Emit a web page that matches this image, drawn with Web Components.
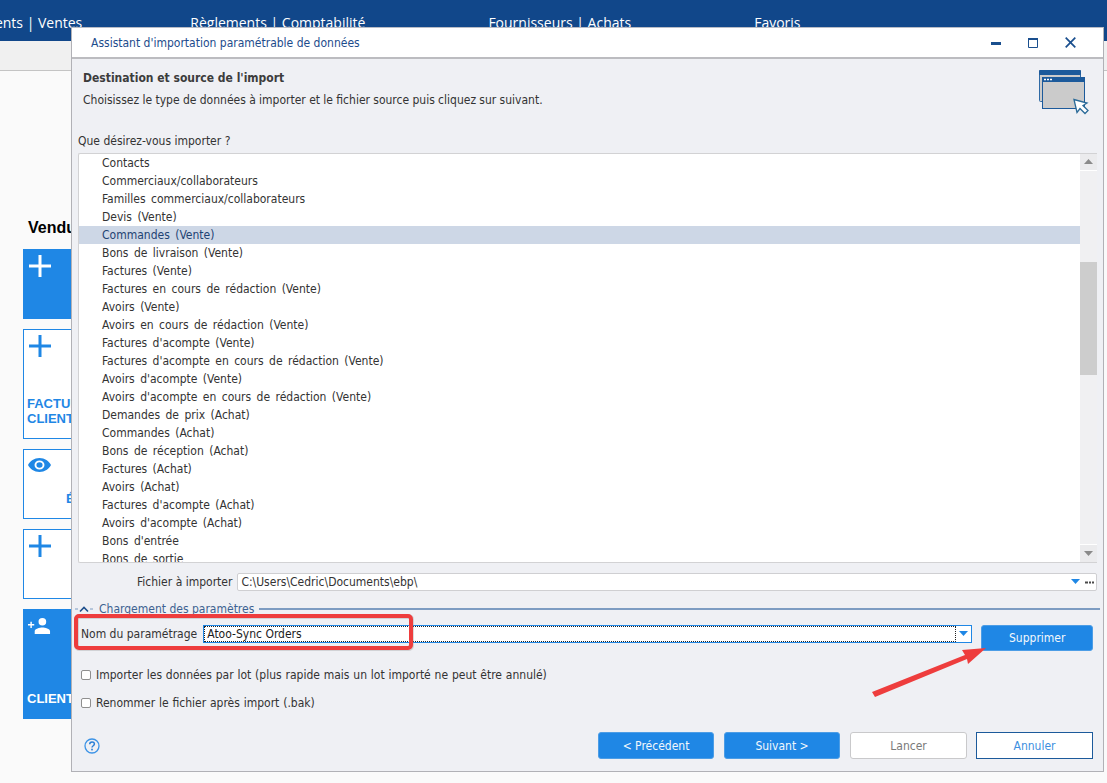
<!DOCTYPE html>
<html lang="fr">
<head>
<meta charset="utf-8">
<title>Assistant d'importation</title>
<style>
html, body { margin: 0; height: 100%; overflow: hidden; background: #fafafa; }
body { position: relative; font-family: "DejaVu Sans Condensed", "DejaVu Sans", sans-serif; font-size: 12px; }
</style>
</head>
<body>
<erp-backdrop>
  <erp-tile variant="fill" icon="plus" style="height:70px"></erp-tile>
  <erp-tile icon="plus" style="height:110px" label="FACTURES<br>CLIENTS"></erp-tile>
  <erp-tile icon="eye" style="height:70px" label="ÉTATS" indent="43"></erp-tile>
  <erp-tile icon="plus" style="height:70px"></erp-tile>
  <erp-tile variant="fill" icon="person" style="height:110px" label="CLIENTS"></erp-tile>
</erp-backdrop>

<import-dialog>
  <list-box slot="list">
    <list-row>Contacts</list-row>
    <list-row>Commerciaux/collaborateurs</list-row>
    <list-row>Familles commerciaux/collaborateurs</list-row>
    <list-row>Devis (Vente)</list-row>
    <list-row selected>Commandes (Vente)</list-row>
    <list-row>Bons de livraison (Vente)</list-row>
    <list-row>Factures (Vente)</list-row>
    <list-row>Factures en cours de rédaction (Vente)</list-row>
    <list-row>Avoirs (Vente)</list-row>
    <list-row>Avoirs en cours de rédaction (Vente)</list-row>
    <list-row>Factures d'acompte (Vente)</list-row>
    <list-row>Factures d'acompte en cours de rédaction (Vente)</list-row>
    <list-row>Avoirs d'acompte (Vente)</list-row>
    <list-row>Avoirs d'acompte en cours de rédaction (Vente)</list-row>
    <list-row>Demandes de prix (Achat)</list-row>
    <list-row>Commandes (Achat)</list-row>
    <list-row>Bons de réception (Achat)</list-row>
    <list-row>Factures (Achat)</list-row>
    <list-row>Avoirs (Achat)</list-row>
    <list-row>Factures d'acompte (Achat)</list-row>
    <list-row>Avoirs d'acompte (Achat)</list-row>
    <list-row>Bons d'entrée</list-row>
    <list-row>Bons de sortie</list-row>
  </list-box>
</import-dialog>

<mark-up></mark-up>

<script>
class ErpBackdrop extends HTMLElement {
  constructor() {
    super();
    this.attachShadow({ mode: "open" }).innerHTML = `
<style>
:host { display: block; height: 783px; color: #fff; }
.top { height: 41px; background: #11478a; display: flex; align-items: flex-start; padding-top: 13px; box-sizing: border-box;
  font: 14px/19px "Open Sans", sans-serif; white-space: nowrap; overflow: hidden; }
.top span:nth-child(1) { margin-left: -21px; }
.top span:nth-child(2) { margin-left: 108px; }
.top span:nth-child(3) { margin-left: 123px; }
.top span:nth-child(4) { margin-left: 123px; }
.band { background: #f0f0f0; border-bottom: 1px solid #c4c4c4; height: 29px; }
h2 { margin: 147px 0 12px 28px; font: bold 16px/19px "Liberation Sans", sans-serif; color: #000; }
.tiles { display: flex; flex-direction: column; gap: 10px; margin-left: 23px; width: 200px; }
</style>
<div class="top"><span>Clients | Ventes</span><span>Règlements | Comptabilité</span><span>Fournisseurs | Achats</span><span>Favoris</span></div>
<div class="band"></div>
<h2>Vendu</h2>
<div class="tiles"><slot></slot></div>`;
  }
}

const TILE_ICONS = {
  plus: `<svg width="22" height="22" viewBox="0 0 22 22"><path d="M9.500 0h3v9.500H22v3h-9.500V22h-3v-9.500H0v-3h9.500z" fill="currentColor"/></svg>`,
  eye: `<svg width="23" height="14" viewBox="0 0 24 16" preserveAspectRatio="none" style="margin:3px 0 0 -1px"><path fill-rule="evenodd" d="M12 0C6.500 0 2.200 3.300 0 8c2.200 4.700 6.500 8 12 8s9.800-3.300 12-8c-2.200-4.700-6.500-8-12-8zm0 13.200a5.200 5.200 0 1 1 0-10.400 5.200 5.200 0 0 1 0 10.400zM12 4.800a3.200 3.200 0 1 0 0 6.400 3.200 3.200 0 0 0 0-6.400z" fill="currentColor"/></svg>`,
  person: `<svg width="23" height="16" viewBox="0 0 24 17" preserveAspectRatio="none" style="margin:3px 0 0 -1px"><path d="M15 8a4 4 0 1 0 0-8 4 4 0 0 0 0 8zm0 2c-2.800 0-8 1.300-8 4v3h16v-3c0-2.700-5.200-4-8-4zM4 6.500V4H2.500v2.500H0V8h2.500v2.500H4V8h2.500V6.500z" fill="currentColor"/></svg>`
};

class ErpTile extends HTMLElement {
  connectedCallback() {
    const root = this.attachShadow({ mode: "open" });
    const fill = this.getAttribute("variant") === "fill";
    const label = this.getAttribute("label") || "";
    const indent = this.getAttribute("indent") || 4;
    root.innerHTML = `
<style>
:host { display: block; box-sizing: border-box; position: relative; color: ${fill ? "#fff" : "#1f87e5"};
  background: ${fill ? "#1f87e5" : "#fff"}; border: 1px solid #1f87e5; padding: 5px; }
.ic { display: block; line-height: 0; }
.lb { position: absolute; left: ${indent - 1}px; bottom: 12px; font: bold 13px/15px "Liberation Sans", sans-serif; white-space: nowrap; }
</style>
<span class="ic">${TILE_ICONS[this.getAttribute("icon")]}</span>
<div class="lb">${label}</div>`;
  }
}

class ImportDialog extends HTMLElement {
  constructor() {
    super();
    this.attachShadow({ mode: "open" }).innerHTML = `
<style>
:host { display: flex; flex-direction: column; position: absolute; left: 71px; top: 27px; width: 1033px; height: 745px; box-sizing: border-box;
  background: #eff0f4; border: 1px solid #b1b1b6; border-top-color: #b8bcc6; color: #333; }
.title { height: 29px; flex: none; background: #fff; border-bottom: 2px solid #bcbcc0; display: flex; align-items: center; padding-left: 19px; color: #1d4c8c; }
.title span { flex: 1; }
.win { display: flex; align-items: center; margin-right: 27px; gap: 27px; color: #1a4f8e; }
.win svg { display: block; }
.head { height: 67px; flex: none; position: relative; padding: 11px 0 0 11px; box-sizing: border-box; }
.head b { display: block; font-size: 12px; line-height: 16px; color: #3c3c3c; }
.head p { margin: 6px 0 0; line-height: 16px; word-spacing: -.1px; }
.head svg { position: absolute; left: 966px; top: 10px; }
.q { margin: 7px 0 4px 6px; line-height: 16px; }
.list { margin: 0 6px; }
.file { display: flex; align-items: center; height: 18px; margin-top: 10px; padding-left: 65px; }
.file label { margin-right: 5px; }
.box { background: #fff; border: 1px solid #cfcfd2; border-radius: 2px; height: 18px; box-sizing: border-box; line-height: 16px; padding-left: 3px; display: flex; align-items: center; }
.file .box { width: 860px; }
.box span { flex: 1; }
.legend { display: flex; align-items: center; height: 16px; margin-top: 10px; padding-left: 3px; color: #3d6291; }
.legend svg { margin-right: 6px; }
.legend i { flex: 1; height: 2px; background: #7d9cc2; margin: 0 3px 0 5px; }
.param { display: flex; align-items: flex-start; margin-top: 8px; padding-left: 9px; }
.param label { line-height: 18px; margin-right: 6px; }
.param .box { width: 769px; border-color: #1f87e5; border-radius: 0; margin-right: 9px; padding: 0; position: relative; }
.dots { flex: 1; height: 100%; box-sizing: border-box; border: 1px dotted #222; padding-left: 2px; line-height: 14px; color: #1b1b1b; }
.checks { margin: 15px 0 0 9px; display: flex; flex-direction: column; gap: 10px; }
.foot { display: flex; align-items: center; margin-top: 20px; padding-left: 12px; }
.foot .help { margin-right: 498px; display: block; }
.foot .btns { display: flex; gap: 10px; }
</style>
<div class="title"><span>Assistant d'importation paramétrable de données</span>
  <div class="win">
    <svg width="10" height="10" viewBox="0 0 10 10"><rect y="4" width="10" height="3" fill="currentColor"/></svg>
    <svg width="10" height="10" viewBox="0 0 10 10"><path d="M.5.500h9v9h-9z M0 1.500h10" fill="none" stroke="currentColor"/><path d="M0 .5h10" stroke="currentColor" stroke-width="2"/></svg>
    <svg width="11" height="11" viewBox="0 0 11 11"><path d="M.7.700l9.600 9.600M10.300.700L.7 10.300" stroke="currentColor" stroke-width="1.700" fill="none"/></svg>
  </div>
</div>
<div class="head">
  <b>Destination et source de l'import</b>
  <p>Choisissez le type de données à importer et le fichier source puis cliquez sur suivant.</p>
  <svg width="52" height="46" viewBox="0 0 52 46">
    <rect x="1.500" y="1.500" width="41" height="31" rx="1" fill="#cbcbcb" stroke="#2f6aa5"/>
    <rect x="1" y="1" width="42" height="5" rx="1" fill="#1c5a9b"/>
    <rect x="4.500" y="8.500" width="42" height="31" fill="#cbcbcb" stroke="#1c5a9b"/>
    <rect x="4" y="8" width="43" height="5" rx="1" fill="#1c5a9b"/>
    <path d="M6 10.500h2M9 10.500h2M12 10.500h2" stroke="#fff" stroke-width="1.500"/>
    <path d="M36 30.500l3 13 3-4 5 5 3-3-5-5 4-2.500z" fill="#fff" stroke="#2a6a98" stroke-width="1.300"/>
  </svg>
</div>
<div class="q">Que désirez-vous importer ?</div>
<div class="list"><slot name="list"></slot></div>
<div class="file">
  <label>Fichier à importer</label>
  <div class="box"><span>C:\\Users\\Cedric\\Documents\\ebp\\</span>
    <svg width="24" height="8" viewBox="0 0 24 8" style="margin-right:1px"><path d="M0 1h9L4.500 6z" fill="#1f87e5"/><path d="M14 3.500h3v2h-3zM18 3.500h2v2h-2zM21 3.500h2v2h-2z" fill="#4a4a4a"/></svg>
  </div>
</div>
<div class="legend">
  <svg width="18" height="8" viewBox="0 0 18 8"><path d="M0 4h3M15 4h3" stroke="#7d9cc2"/><path d="M5 6.500l4-4 4 4" stroke="#1e4f8c" stroke-width="1.600" fill="none"/></svg>
  Chargement des paramètres<i></i>
</div>
<div class="param">
  <label>Nom du paramétrage</label>
  <div class="box"><div class="dots">Atoo-Sync Orders</div>
    <svg width="15" height="8" viewBox="0 0 15 8"><path d="M3 1h9L7.500 6z" fill="#1f87e5"/></svg>
  </div>
  <wiz-button kind="primary">Supprimer</wiz-button>
</div>
<div class="checks">
  <check-row>Importer les données par lot (plus rapide mais un lot importé ne peut être annulé)</check-row>
  <check-row>Renommer le fichier après import (.bak)</check-row>
</div>
<div class="foot">
  <svg class="help" width="16" height="16" viewBox="0 0 16 16"><circle cx="8" cy="8" r="7" fill="none" stroke="#3c93e6" stroke-width="1.300"/><path d="M5.700 6.200c0-3 4.700-3 4.700-.2 0 1.800-2.400 1.700-2.400 3.600" fill="none" stroke="#2a7fd6" stroke-width="1.500"/><rect x="7.200" y="10.700" width="1.600" height="1.700" fill="#2a7fd6"/></svg>
  <div class="btns">
    <wiz-button kind="primary" style="width:116px;height:27px">&lt; Précédent</wiz-button>
    <wiz-button kind="primary" style="width:116px;height:27px">Suivant &gt;</wiz-button>
    <wiz-button kind="plain" style="width:117px;height:27px">Lancer</wiz-button>
    <wiz-button kind="cancel" style="width:117px;height:27px;margin-left:-1px">Annuler</wiz-button>
  </div>
</div>`;
  }
}

class ListBox extends HTMLElement {
  constructor() {
    super();
    this.attachShadow({ mode: "open" }).innerHTML = `
<style>
:host { display: flex; height: 410px; box-sizing: border-box; background: #fff; border: 1px solid #d2d2d4; border-right: 0; border-radius: 2px 0 0 2px; overflow: hidden; }
.rows { flex: 1; overflow: hidden; }
.bar { width: 17px; display: flex; flex-direction: column; gap: 1px; flex: none; background: #fff; margin-top: -1px; }
.btn { height: 17px; background: #ebebed; display: flex; align-items: center; justify-content: center; flex: none; }
.track { flex: 1; background: #f0f0f2; padding-top: 91px; box-sizing: border-box; }
.thumb { height: 113px; background: #cdcdcd; }
</style>
<div class="rows"><slot></slot></div>
<div class="bar">
  <div class="btn"><svg width="9" height="5" viewBox="0 0 9 5"><path d="M4.500 0L9 5H0z" fill="#8a8a8a"/></svg></div>
  <div class="track"><div class="thumb"></div></div>
  <div class="btn"><svg width="9" height="5" viewBox="0 0 9 5"><path d="M0 0h9L4.500 5z" fill="#8a8a8a"/></svg></div>
</div>`;
  }
}

class ListRow extends HTMLElement {
  constructor() {
    super();
    this.attachShadow({ mode: "open" }).innerHTML = `
<style>
:host { display: block; height: 18px; line-height: 18px; padding-left: 23px; color: #333; white-space: nowrap; word-spacing: 2px; }
:host([selected]) { background: #cdd7e6; color: #1f4373; }
</style><slot></slot>`;
  }
}

class WizButton extends HTMLElement {
  constructor() {
    super();
    this.attachShadow({ mode: "open" }).innerHTML = `
<style>
:host { display: flex; align-items: center; justify-content: center; box-sizing: border-box; width: 112px; height: 26px; border-radius: 3px; border: 1px solid transparent; }
:host([kind="primary"]) { background: #1f87e5; border-color: #4c9de6; color: #f2f7fc; }
:host([kind="plain"]) { background: #fff; border-color: #c9c9cb; color: #7a7a7a; }
:host([kind="cancel"]) { background: #fff; border-color: #1c5a9b; border-radius: 0; color: #3e8fe0; }
</style><slot></slot>`;
  }
}

class CheckRow extends HTMLElement {
  constructor() {
    super();
    this.attachShadow({ mode: "open" }).innerHTML = `
<style>
:host { display: flex; align-items: center; height: 18px; word-spacing: .4px; }
i { width: 8px; height: 8px; border: 1px solid #8f8f8f; border-radius: 2px; background: #fff; margin-right: 5px; flex: none; }
</style><i></i><slot></slot>`;
  }
}

class MarkUp extends HTMLElement {
  constructor() {
    super();
    this.attachShadow({ mode: "open" }).innerHTML = `
<style>
:host { position: absolute; inset: 0; display: block; pointer-events: none; }
svg { display: block; }
</style>
<svg width="1107" height="783" viewBox="0 0 1107 783">
  <rect x="76.500" y="616.500" width="335" height="32" rx="3" fill="none" stroke="#9a9a9a" stroke-opacity=".35" stroke-width="5"/>
  <rect x="76" y="616" width="335" height="32" rx="3" fill="none" stroke="#ee3d3d" stroke-width="4"/>
  <polygon points="872,692 965,655 962,650 986,648 968,664 967,659 875,697" fill="#ee3d3d"/>
</svg>`;
  }
}

customElements.define("erp-backdrop", ErpBackdrop);
customElements.define("erp-tile", ErpTile);
customElements.define("import-dialog", ImportDialog);
customElements.define("list-box", ListBox);
customElements.define("list-row", ListRow);
customElements.define("wiz-button", WizButton);
customElements.define("check-row", CheckRow);
customElements.define("mark-up", MarkUp);
</script>
</body>
</html>
